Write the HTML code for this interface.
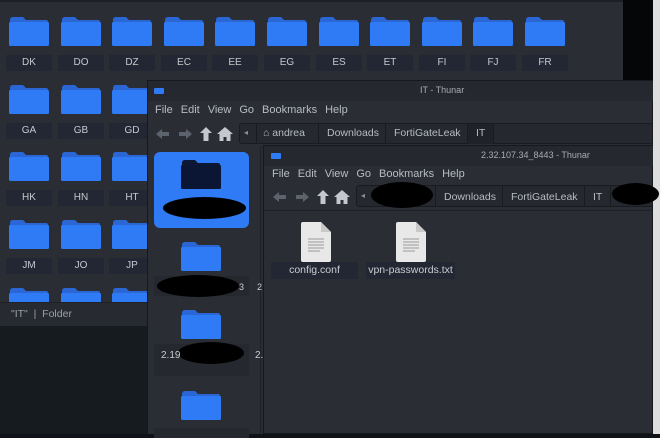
<!DOCTYPE html>
<html><head><meta charset="utf-8"><style>
*{margin:0;padding:0;box-sizing:border-box}
body{width:660px;height:434px;overflow:hidden;position:relative;background:#0f1216;font-family:"Liberation Sans","DejaVu Sans",sans-serif;font-size:10px;color:#c8ccd2}
.a{position:absolute}
.lab{position:absolute;width:46px;height:16px;background:#222733;color:#c4c8cf;text-align:center;line-height:16px;font-size:10px}
.fo{position:absolute;width:40px;height:29px}
.menu span{margin-right:8px}
.blk{position:absolute;background:#000;border-radius:50%}
</style></head><body>
<svg width="0" height="0" style="position:absolute"><defs>
<symbol id="f" viewBox="0 0 40 29"><path d="M1 3q0-3 3-3h10l3 3h20q2 0 2 2v6H1z" fill="#2a67d4"/><rect x="0" y="5" width="40" height="24" rx="1.5" fill="#2f7bf5"/></symbol>
<symbol id="doc" viewBox="0 0 30 40"><path d="M2 0h18l10 10v28q0 2-2 2H2q-2 0-2-2V2q0-2 2-2z" fill="#e8e8e8"/><path d="M20 0v10h10z" fill="#c9c9c9"/><g stroke="#9a9a9a" stroke-width="1"><path d="M7 17h16M7 20h16M7 23h16M7 26h16M7 29h12"/></g></symbol>
<symbol id="tb" viewBox="0 0 80 16">
<path d="M2 8l6-5v3h7v4H8v3z" fill="#5d636c"/>
<path d="M38 8l-6-5v3h-7v4h7v3z" fill="#5d636c"/>
<path d="M52 1l6 6h-3.5v8h-5V7H46z" fill="#c4c8ce"/>
<path d="M71 1l-8 7h2.5v7h4v-4h3v4h4V8H79z" fill="#c4c8ce"/>
</symbol>
</defs></svg>

<div class="a" style="left:0;top:326px;width:150px;height:108px;background:#161b20"></div>
<div class="a" style="left:623px;top:0;width:31px;height:80px;background:#050607"></div>
<div class="a" style="left:653px;top:0;width:7px;height:434px;background:#dedede"></div>

<div class="a" style="left:0;top:0;width:623px;height:326px;background:#2a2d34;border-top:2px solid #1c1f24"></div>
<div id="g"></div>
<div class="a" style="left:0;top:302px;width:623px;height:24px;background:#272a31;border-top:1px solid #1e2126"></div>
<div class="a" style="left:11px;top:308px;color:#9aa0a8;font-size:10.5px">"IT" &nbsp;|&nbsp; Folder</div>

<div class="a" style="left:147px;top:80px;width:506px;height:354px;background:#2a2d34;border:1px solid #16181c"></div>
<div class="a" style="left:148px;top:81px;width:505px;height:20px;background:#25282e"></div>
<div class="a" style="left:154px;top:88px;width:10px;height:6px;background:#2f7bf5;border-radius:1px"></div>
<div class="a" style="left:420px;top:85px;font-size:9px;color:#a8acb3">IT - Thunar</div>
<div class="a menu" style="left:155px;top:104px;font-size:11px;color:#b8bcc3"><span>File</span><span>Edit</span><span>View</span><span>Go</span><span>Bookmarks</span><span>Help</span></div>
<svg class="a" style="left:154px;top:126px" width="80" height="16"><use href="#tb"/></svg>
<div class="a" style="left:239px;top:123px;width:414px;height:21px;background:#25282e;border:1px solid #191b20;border-radius:3px"></div>
<div class="a" style="left:256px;top:124px;width:1px;height:20px;background:#191b20"></div>
<div class="a" style="left:244px;top:128px;color:#8a9099;font-size:8px">◂</div>
<div class="a" style="left:263px;top:127px;font-size:10.5px;color:#b8bcc3">⌂ andrea</div>
<div class="a" style="left:318px;top:124px;width:1px;height:20px;background:#191b20"></div>
<div class="a" style="left:327px;top:127px;font-size:10.5px;color:#b8bcc3">Downloads</div>
<div class="a" style="left:385px;top:124px;width:1px;height:20px;background:#191b20"></div>
<div class="a" style="left:394px;top:127px;font-size:10.5px;color:#b8bcc3">FortiGateLeak</div>
<div class="a" style="left:467px;top:124px;width:27px;height:20px;background:#1f2227;border-left:1px solid #191b20;border-right:1px solid #191b20"></div>
<div class="a" style="left:476px;top:127px;font-size:10.5px;color:#b8bcc3">IT</div>
<div class="a" style="left:148px;top:146px;width:115px;height:288px;background:#2a2d34"></div>
<div class="a" style="left:260px;top:146px;width:1px;height:288px;background:#1e2126"></div>
<div class="a" style="left:154px;top:152px;width:95px;height:76px;background:#2f7bf5;border-radius:6px"></div>
<svg class="fo" style="left:181px;top:160px" viewBox="0 0 40 29"><path d="M1 3q0-3 3-3h10l3 3h20q2 0 2 2v6H1z" fill="#0c1735"/><rect x="0" y="5" width="40" height="24" rx="1.5" fill="#0a1633"/></svg>
<div class="blk" style="left:163px;top:197px;width:83px;height:22px"></div>
<svg class="fo" style="left:181px;top:242px"><use href="#f"/></svg>
<div class="a" style="left:154px;top:276px;width:95px;height:20px;background:#25292f"></div>
<div class="blk" style="left:157px;top:275px;width:82px;height:22px"></div>
<div class="a" style="left:239px;top:282px;font-size:9px">3</div>
<div class="a" style="left:257px;top:282px;font-size:9px">2</div>
<svg class="fo" style="left:181px;top:310px"><use href="#f"/></svg>
<div class="a" style="left:154px;top:344px;width:95px;height:32px;background:#25292f"></div>
<div class="blk" style="left:178px;top:342px;width:66px;height:22px"></div>
<div class="a" style="left:161px;top:350px;font-size:10px">2.19</div>
<div class="a" style="left:255px;top:350px;font-size:10px">2.</div>
<svg class="fo" style="left:181px;top:391px"><use href="#f"/></svg>
<div class="a" style="left:154px;top:428px;width:95px;height:10px;background:#25292f"></div>

<div class="a" style="left:263px;top:145px;width:390px;height:289px;background:#2a2d34;border:1px solid #16181c"></div>
<div class="a" style="left:264px;top:146px;width:389px;height:20px;background:#25282e"></div>
<div class="a" style="left:271px;top:153px;width:10px;height:6px;background:#2f7bf5;border-radius:1px"></div>
<div class="a" style="left:481px;top:150px;font-size:9px;color:#a8acb3">2.32.107.34_8443 - Thunar</div>
<div class="a menu" style="left:272px;top:168px;font-size:11px;color:#b8bcc3"><span>File</span><span>Edit</span><span>View</span><span>Go</span><span>Bookmarks</span><span>Help</span></div>
<svg class="a" style="left:271px;top:189px" width="80" height="16"><use href="#tb"/></svg>
<div class="a" style="left:356px;top:185px;width:297px;height:22px;background:#25282e;border:1px solid #191b20;border-radius:3px"></div>
<div class="a" style="left:361px;top:191px;color:#8a9099;font-size:8px">◂</div>
<div class="a" style="left:435px;top:186px;width:1px;height:20px;background:#191b20"></div>
<div class="a" style="left:444px;top:191px;font-size:10.5px;color:#b8bcc3">Downloads</div>
<div class="a" style="left:502px;top:186px;width:1px;height:20px;background:#191b20"></div>
<div class="a" style="left:511px;top:191px;font-size:10.5px;color:#b8bcc3">FortiGateLeak</div>
<div class="a" style="left:584px;top:186px;width:1px;height:20px;background:#191b20"></div>
<div class="a" style="left:593px;top:191px;font-size:10.5px;color:#b8bcc3">IT</div>
<div class="a" style="left:610px;top:186px;width:1px;height:20px;background:#191b20"></div>
<div class="blk" style="left:371px;top:182px;width:62px;height:26px"></div>
<div class="blk" style="left:612px;top:183px;width:47px;height:22px"></div>
<div class="a" style="left:264px;top:210px;width:389px;height:1px;background:#1e2126"></div>
<svg class="a" style="left:301px;top:222px" width="30" height="40"><use href="#doc"/></svg>
<svg class="a" style="left:396px;top:222px" width="30" height="40"><use href="#doc"/></svg>
<div class="a" style="left:271px;top:262px;width:87px;height:17px;background:#222733;text-align:center;line-height:17px;font-size:10.5px">config.conf</div>
<div class="a" style="left:366px;top:262px;width:89px;height:17px;background:#222733;text-align:center;line-height:17px;font-size:10.5px">vpn-passwords.txt</div>

<script>
var L=[["DK","DO","DZ","EC","EE","EG","ES","ET","FI","FJ","FR"],["GA","GB","GD"],["HK","HN","HT"],["JM","JO","JP"],[]];
var rows=[17,85,152,220,288],h="";
for(var r=0;r<5;r++){var n=r==0?11:3;for(var i=0;i<n;i++){var x=Math.round(6+51.6*i);
 if(r<4)h+='<svg class="fo" style="left:'+(x+3)+'px;top:'+rows[r]+'px"><use href="#f"/></svg>';
 else h+='<svg class="a" style="left:'+(x+3)+'px;top:288px" width="40" height="14" viewBox="0 0 40 14"><use href="#f" width="40" height="29"/></svg>';
 if(L[r][i])h+='<div class="lab" style="left:'+x+'px;top:'+(rows[r]+38)+'px">'+L[r][i]+'</div>';}}
document.getElementById("g").outerHTML=h;
</script>
</body></html>
